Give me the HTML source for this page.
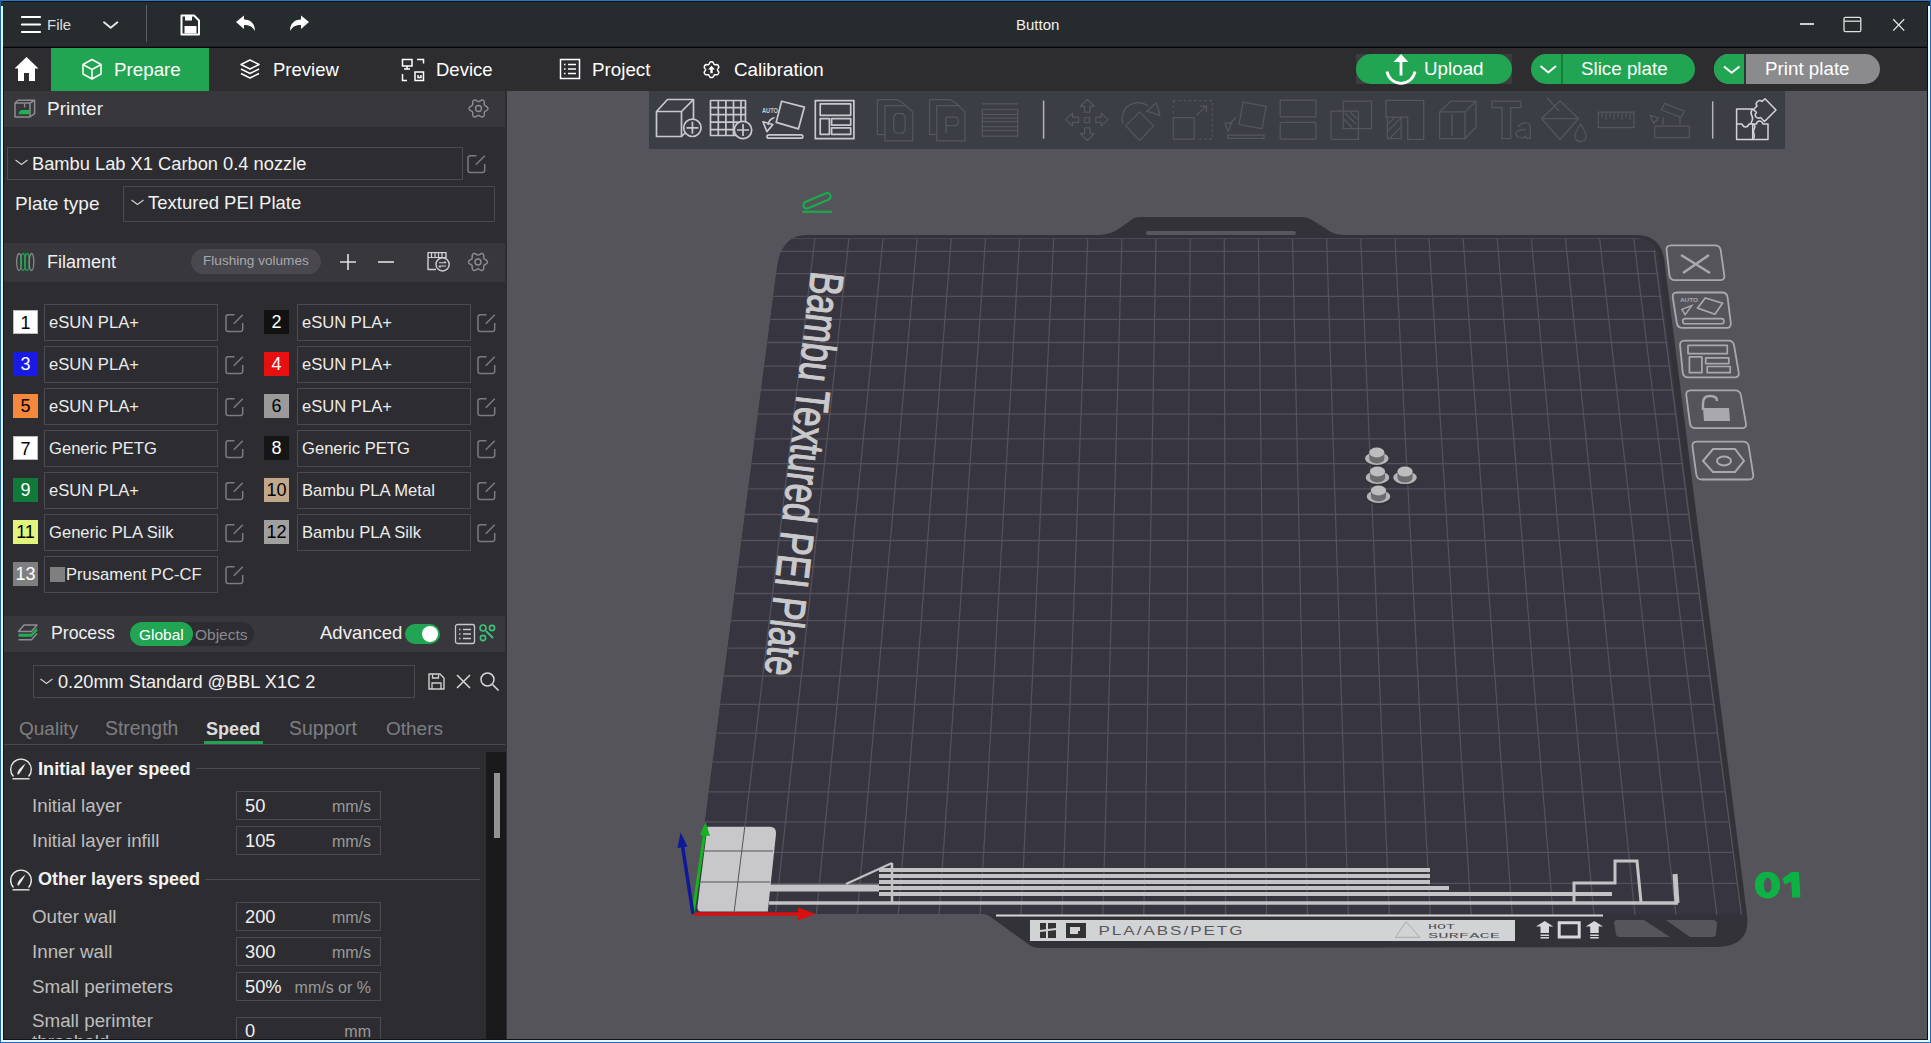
<!DOCTYPE html>
<html><head><meta charset="utf-8"><title>Button</title>
<style>
*{margin:0;padding:0;box-sizing:border-box}
html,body{width:1931px;height:1043px;overflow:hidden;background:#2d2d31}
body{position:relative;font-family:"Liberation Sans",sans-serif;color:#e8e8e8}
.a{position:absolute}
.t{position:absolute;white-space:nowrap;line-height:1}
svg{position:absolute;overflow:visible}
.ed{position:absolute;width:19px;height:19px}
.fbox{position:absolute;border:1px solid #4a4a50;background:#2d2d31}
.num{position:absolute;width:23px;height:23px;font-size:18px;line-height:24px;text-align:center}
.ftxt{position:absolute;font-size:16.6px;line-height:1;white-space:nowrap;color:#ececec}
.lab{position:absolute;font-size:18.8px;color:#bdbdbd;white-space:nowrap;line-height:1}
.inp{position:absolute;border:1px solid #4a4a50;width:145px;height:32px}
.inp .v{position:absolute;left:8px;font-size:18.3px;color:#f0f0f0;line-height:1}
.inp .u{position:absolute;right:9px;font-size:16px;color:#9a9a9a;line-height:1}
</style></head><body>

<div class="a" style="left:0;top:0;width:1931px;height:48px;background:#262b2e"></div>
<div class="a" style="left:0;top:46px;width:1931px;height:1px;background:#1c1f21"></div><div class="a" style="left:0;top:47px;width:1931px;height:1px;background:#050607"></div>
<div class="a" style="left:0;top:48px;width:1931px;height:43px;background:#2d2d30"></div>

<svg style="left:20px;top:14px" width="24" height="20" viewBox="0 0 24 20">
 <path d="M2 3H20M2 10.5H20M2 18H20" stroke="#fff" stroke-width="2.2" stroke-linecap="round"/>
</svg>
<div class="t" style="left:47px;top:16.8px;font-size:15px;color:#dedede">File</div>
<svg style="left:100px;top:18px" width="22" height="14" viewBox="100 18 22 14">
 <path d="M104 22.3L110.7 27.8L117.4 22.3" stroke="#e6e6e6" stroke-width="1.9" fill="none" stroke-linecap="round"/>
</svg>
<div class="a" style="left:146px;top:5px;width:1px;height:39px;background:#5a5e62"></div>
<svg style="left:178px;top:13px" width="24" height="24" viewBox="0 0 24 24">
 <path d="M3.5 2.5H16L21 7.5V21.5H3.5Z" stroke="#fff" stroke-width="2" fill="none" stroke-linejoin="round"/>
 <rect x="7" y="3" width="7" height="4.5" fill="#fff"/>
 <rect x="6.5" y="13" width="12" height="7.5" fill="#fff"/>
</svg>
<svg style="left:233px;top:14px" width="24" height="20" viewBox="0 0 24 20">
 <path d="M3 8L11 1.5V5.5C18 5.5 22 10 22 17C19.5 12.5 16 11 11 11V15Z" fill="#fff"/>
</svg>
<svg style="left:288px;top:14px" width="24" height="20" viewBox="0 0 24 20">
 <path d="M21 8L13 1.5V5.5C6 5.5 2 10 2 17C4.5 12.5 8 11 13 11V15Z" fill="#fff"/>
</svg>
<div class="t" style="left:1016px;top:17.2px;font-size:15px;color:#f0f0f0">Button</div>
<div class="a" style="left:1800px;top:23.3px;width:13.5px;height:1.3px;background:#d0d0d0"></div>
<svg style="left:1840px;top:12px" width="26" height="24" viewBox="1840 12 26 24">
 <rect x="1844" y="17.3" width="16.8" height="14.4" rx="1.5" stroke="#e0e0e0" stroke-width="1.3" fill="none"/>
 <path d="M1844 21.2H1860.8" stroke="#e0e0e0" stroke-width="1.3"/>
</svg>
<svg style="left:1888px;top:14px" width="22" height="22" viewBox="1888 14 22 22">
 <path d="M1893.2 19.2L1904.2 30.6M1904.2 19.2L1893.2 30.6" stroke="#e6e6e6" stroke-width="1.3"/>
</svg>

<svg style="left:13px;top:56px" width="28" height="26" viewBox="0 0 28 26">
 <path d="M13.5 1L1.5 12.5H5V25H11V17H16V25H22V12.5H25.5Z" fill="#fff"/>
</svg>
<div class="a" style="left:51px;top:48px;width:158px;height:43px;background:#22a552"></div>
<svg style="left:81px;top:58px" width="22" height="22" viewBox="0 0 22 22">
 <path d="M11 1.5L20 6.5V16L11 21L2 16V6.5Z M2 6.5L11 11.5L20 6.5 M11 11.5V21" stroke="#fff" stroke-width="1.5" fill="none" stroke-linejoin="round"/>
</svg>
<div class="t" style="left:114px;top:60.5px;font-size:18.8px;color:#fff">Prepare</div>
<svg style="left:239px;top:58px" width="22" height="22" viewBox="0 0 22 22">
 <path d="M11 2L20 6.5L11 11L2 6.5Z M2 11L11 15.5L20 11 M2 15.5L11 20L20 15.5" stroke="#fff" stroke-width="1.5" fill="none" stroke-linejoin="round"/>
</svg>
<div class="t" style="left:273px;top:60.6px;font-size:18.5px;color:#fff">Preview</div>
<svg style="left:401px;top:58px" width="24" height="24" viewBox="0 0 24 24">
 <path d="M1.5 1.5H11V8H1.5Z M6 8V11 M3 11H9" stroke="#fff" stroke-width="1.5" fill="none"/>
 <path d="M16 1.5H22.5V5.5 M1.5 16V22.5H6 M14 14H22.5V22.5H14Z M17 17V19.5H20V17" stroke="#fff" stroke-width="1.5" fill="none"/>
</svg>
<div class="t" style="left:436px;top:60.6px;font-size:18.5px;color:#fff">Device</div>
<svg style="left:559px;top:58px" width="22" height="22" viewBox="0 0 22 22">
 <rect x="1.5" y="1.5" width="19" height="19" stroke="#fff" stroke-width="1.5" fill="none"/>
 <path d="M5 6.5H6.5M9 6.5H17M5 11H6.5M9 11H17M5 15.5H6.5M9 15.5H17" stroke="#fff" stroke-width="1.5"/>
</svg>
<div class="t" style="left:592px;top:60.5px;font-size:18.8px;color:#fff">Project</div>
<svg style="left:700px;top:58px" width="24" height="24" viewBox="700 58 24 24">
 <path d="M717.40 69.70L717.43 69.91L717.52 70.12L717.65 70.35L717.81 70.59L717.97 70.84L718.10 71.10L718.17 71.36L718.62 71.74L718.73 72.05L718.75 72.34L718.72 72.62L718.66 72.89L718.58 73.15L718.47 73.41L718.34 73.65L718.19 73.88L718.03 74.10L717.84 74.31L717.64 74.49L717.41 74.66L717.15 74.79L716.83 74.85L716.27 74.64L716.01 74.71L715.72 74.73L715.42 74.72L715.14 74.71L714.87 74.70L714.64 74.73L714.45 74.81L714.29 74.94L714.15 75.12L714.02 75.35L713.89 75.61L713.75 75.87L713.59 76.12L713.39 76.31L713.29 76.89L713.08 77.14L712.84 77.30L712.58 77.41L712.32 77.50L712.05 77.55L711.78 77.59L711.50 77.60L711.22 77.59L710.95 77.55L710.68 77.50L710.42 77.41L710.16 77.30L709.92 77.14L709.71 76.89L709.61 76.31L709.41 76.12L709.25 75.87L709.11 75.61L708.98 75.35L708.85 75.12L708.71 74.94L708.55 74.81L708.36 74.73L708.13 74.70L707.86 74.71L707.58 74.72L707.28 74.73L706.99 74.71L706.73 74.64L706.17 74.85L705.85 74.79L705.59 74.66L705.36 74.49L705.16 74.31L704.97 74.10L704.81 73.88L704.66 73.65L704.53 73.41L704.42 73.15L704.34 72.89L704.28 72.62L704.25 72.34L704.27 72.05L704.38 71.74L704.83 71.36L704.90 71.10L705.03 70.84L705.19 70.59L705.35 70.35L705.48 70.12L705.57 69.91L705.60 69.70L705.57 69.49L705.48 69.28L705.35 69.05L705.19 68.81L705.03 68.56L704.90 68.30L704.83 68.04L704.38 67.66L704.27 67.35L704.25 67.06L704.28 66.78L704.34 66.51L704.42 66.25L704.53 65.99L704.66 65.75L704.81 65.52L704.97 65.30L705.16 65.09L705.36 64.91L705.59 64.74L705.85 64.61L706.17 64.55L706.73 64.76L706.99 64.69L707.28 64.67L707.58 64.68L707.86 64.69L708.13 64.70L708.36 64.67L708.55 64.59L708.71 64.46L708.85 64.28L708.98 64.05L709.11 63.79L709.25 63.53L709.41 63.28L709.61 63.09L709.71 62.51L709.92 62.26L710.16 62.10L710.42 61.99L710.68 61.90L710.95 61.85L711.22 61.81L711.50 61.80L711.78 61.81L712.05 61.85L712.32 61.90L712.58 61.99L712.84 62.10L713.08 62.26L713.29 62.51L713.39 63.09L713.59 63.28L713.75 63.53L713.89 63.79L714.02 64.05L714.15 64.28L714.29 64.46L714.45 64.59L714.64 64.67L714.87 64.70L715.14 64.69L715.42 64.68L715.72 64.67L716.01 64.69L716.27 64.76L716.83 64.55L717.15 64.61L717.41 64.74L717.64 64.91L717.84 65.09L718.03 65.30L718.19 65.52L718.34 65.75L718.47 65.99L718.58 66.25L718.66 66.51L718.72 66.78L718.75 67.06L718.73 67.35L718.62 67.66L718.17 68.04L718.10 68.30L717.97 68.56L717.81 68.81L717.65 69.05L717.52 69.28L717.43 69.49Z" stroke="#fff" stroke-width="1.5" fill="none" stroke-linejoin="round"/>
 <path d="M711.5 65.8L714.9 69.6H712.7V73.3H710.3V69.6H708.1Z" fill="#fff"/>
</svg>
<div class="t" style="left:734px;top:60.5px;font-size:18.8px;color:#fff">Calibration</div>

<div class="a" style="left:1356px;top:54px;width:156px;height:30px;background:#3b3d40"></div>
<div class="a" style="left:1356px;top:54px;width:156px;height:30px;border-radius:15px;background:#22a552"></div>
<svg style="left:1380px;top:50px" width="42" height="40" viewBox="1380 50 42 40">
 <path d="M1393.6 62L1401 54L1408.4 62Z" fill="#fff"/>
 <path d="M1401 61V75.5" stroke="#fff" stroke-width="2.8"/>
 <path d="M1387 71.5A14.2 14.2 0 0 0 1415 71.5" stroke="#fff" stroke-width="2.8" fill="none"/>
</svg>
<div class="t" style="left:1424px;top:59.5px;font-size:18.8px;color:#fff">Upload</div>
<div class="a" style="left:1531px;top:54px;width:164px;height:30px;border-radius:15px;background:#22a552"></div>
<div class="a" style="left:1561px;top:54px;width:2px;height:30px;background:#1b7a3d"></div>
<svg style="left:1536px;top:60px" width="24" height="18" viewBox="1536 60 24 18">
 <path d="M1540.5 66L1548.3 72.5L1556 66" stroke="#fff" stroke-width="2" fill="none"/>
</svg>
<div class="t" style="left:1581px;top:59.5px;font-size:18.8px;color:#fff">Slice plate</div>
<div class="a" style="left:1714px;top:54px;width:166px;height:30px;border-radius:15px;background:#8b8b8e"></div>
<div class="a" style="left:1714px;top:54px;width:30px;height:30px;border-radius:15px 0 0 15px;background:#22a552"></div>
<div class="a" style="left:1744px;top:54px;width:2px;height:30px;background:#2b3a30"></div>
<svg style="left:1719px;top:60px" width="24" height="18" viewBox="1719 60 24 18">
 <path d="M1724 66.5L1731.6 72.8L1739.5 66.5" stroke="#fff" stroke-width="2" fill="none"/>
</svg>
<div class="t" style="left:1765px;top:59.5px;font-size:18.8px;color:#fff">Print plate</div>

<div class="a" style="left:0;top:91px;width:507px;height:952px;background:#2d2d31"></div>
<div class="a" style="left:3px;top:91px;width:502px;height:36px;background:#37373c"></div>
<div class="a" style="left:3px;top:243px;width:502px;height:39px;background:#37373c"></div>
<div class="a" style="left:3px;top:616px;width:502px;height:36px;background:#37373c"></div>

<svg style="left:10px;top:95px" width="30" height="28" viewBox="10 95 30 28">
 <path d="M15 103H30V117H15Z M15 103L18 100.3H34.6L30 103 M34.6 100.3V113.6L30 117" stroke="#8c8c90" stroke-width="1.5" fill="none" stroke-linejoin="round"/>
 <path d="M24.6 103.4V107.4" stroke="#8c8c90" stroke-width="1.3"/>
 <path d="M18.3 114.2H29V110H21.5Q19 111 18.3 114.2Z" fill="#1fb152"/>
</svg>
<div class="t" style="left:47px;top:99px;font-size:19px;color:#f0f0f0">Printer</div>
<svg style="left:464px;top:94px" width="28" height="28" viewBox="464 94 28 28">
 <path d="M488.00 108.50L487.88 109.11L487.54 109.69L487.03 110.20L486.42 110.62L485.79 110.98L485.23 111.29L484.78 111.60L484.48 111.95L484.32 112.39L484.28 112.93L484.29 113.58L484.30 114.30L484.23 115.04L484.05 115.73L483.72 116.32L483.25 116.73L482.66 116.93L481.99 116.93L481.30 116.74L480.62 116.42L480.00 116.05L479.45 115.72L478.96 115.48L478.50 115.40L478.04 115.48L477.55 115.72L477.00 116.05L476.38 116.42L475.70 116.74L475.01 116.93L474.34 116.93L473.75 116.73L473.28 116.32L472.95 115.73L472.77 115.04L472.70 114.30L472.71 113.58L472.72 112.93L472.68 112.39L472.52 111.95L472.22 111.60L471.77 111.29L471.21 110.98L470.58 110.62L469.97 110.20L469.46 109.69L469.12 109.11L469.00 108.50L469.12 107.89L469.46 107.31L469.97 106.80L470.58 106.38L471.21 106.02L471.77 105.71L472.22 105.40L472.52 105.05L472.68 104.61L472.72 104.07L472.71 103.42L472.70 102.70L472.77 101.96L472.95 101.27L473.28 100.68L473.75 100.27L474.34 100.07L475.01 100.07L475.70 100.26L476.38 100.58L477.00 100.95L477.55 101.28L478.04 101.52L478.50 101.60L478.96 101.52L479.45 101.28L480.00 100.95L480.62 100.58L481.30 100.26L481.99 100.07L482.66 100.07L483.25 100.27L483.72 100.68L484.05 101.27L484.23 101.96L484.30 102.70L484.29 103.42L484.28 104.07L484.32 104.61L484.48 105.05L484.78 105.40L485.23 105.71L485.79 106.02L486.42 106.38L487.03 106.80L487.54 107.31L487.88 107.89Z" stroke="#8e8e92" stroke-width="1.4" fill="none"/>
 <circle cx="478.5" cy="108.5" r="3" stroke="#8e8e92" stroke-width="1.4" fill="none"/>
</svg>

<div class="fbox" style="left:7px;top:147px;width:456px;height:33px"></div>
<svg style="left:14px;top:157px" width="16" height="10" viewBox="0 0 16 10">
 <path d="M1.5 3L7.5 7.5L13.5 3" stroke="#cfcfcf" stroke-width="1.2" fill="none"/>
</svg>
<div class="t" style="left:32px;top:154.5px;font-size:18.3px;color:#f2f2f2">Bambu Lab X1 Carbon 0.4 nozzle</div>
<svg style="left:467px;top:154px" width="20" height="20" viewBox="0 0 20 20">
 <path d="M9.5 1.8H3.3Q1 1.8 1 4.1V16.2Q1 18.5 3.3 18.5H15.4Q17.7 18.5 17.7 16.2V10" stroke="#7c7c80" stroke-width="1.5" fill="none"/>
 <path d="M8.8 10.8L17.8 1.8" stroke="#7c7c80" stroke-width="1.5"/>
</svg>
<div class="t" style="left:15px;top:194px;font-size:19px;color:#f0f0f0">Plate type</div>
<div class="fbox" style="left:123px;top:186px;width:372px;height:36px"></div>
<svg style="left:130px;top:197px" width="16" height="10" viewBox="0 0 16 10">
 <path d="M1.5 3L7.5 7.5L13.5 3" stroke="#cfcfcf" stroke-width="1.2" fill="none"/>
</svg>
<div class="t" style="left:148px;top:194.3px;font-size:18.5px;color:#f2f2f2">Textured PEI Plate</div>

<svg style="left:15px;top:251px" width="22" height="22" viewBox="0 0 22 22">
 <ellipse cx="4" cy="11" rx="2.3" ry="8.5" stroke="#8a8a8e" stroke-width="1.3" fill="none"/>
 <ellipse cx="8" cy="11" rx="2.3" ry="8.5" stroke="#22a552" stroke-width="1.3" fill="none"/>
 <ellipse cx="12" cy="11" rx="2.3" ry="8.5" stroke="#22a552" stroke-width="1.3" fill="none"/>
 <ellipse cx="16.5" cy="11" rx="2.3" ry="8.5" stroke="#8a8a8e" stroke-width="1.3" fill="none"/>
</svg>
<div class="t" style="left:47px;top:252.8px;font-size:18px;color:#f0f0f0">Filament</div>
<div class="a" style="left:191px;top:249px;width:130px;height:25px;border-radius:12.5px;background:#48484e"></div>
<div class="t" style="left:203px;top:254px;font-size:13.6px;color:#a8a8ac">Flushing volumes</div>
<svg style="left:338px;top:252px" width="20" height="20" viewBox="0 0 20 20">
 <path d="M10 2V18M2 10H18" stroke="#e0e0e0" stroke-width="1.6"/>
</svg>
<svg style="left:376px;top:252px" width="20" height="20" viewBox="0 0 20 20">
 <path d="M2 10H18" stroke="#e0e0e0" stroke-width="1.6"/>
</svg>
<svg style="left:424px;top:248px" width="28" height="28" viewBox="424 248 28 28">
 <path d="M436 269.5H428V252.6H446V258" stroke="#d0d0d4" stroke-width="1.4" fill="none" stroke-linejoin="round"/>
 <path d="M428 257.5H446 M431.5 253V257.5M435 253V257.5M438.5 253V257.5M442 253V257.5" stroke="#d0d0d4" stroke-width="1.2"/>
 <circle cx="442.6" cy="264.4" r="6.6" stroke="#d0d0d4" stroke-width="1.4" fill="#37373c"/>
 <path d="M439 262.8H446M444.5 261.3L446.2 262.8 M446 266H439M440.5 267.5L438.8 266" stroke="#d0d0d4" stroke-width="1.1" fill="none"/>
</svg>
<svg style="left:464px;top:248px" width="28" height="28" viewBox="464 248 28 28">
 <path d="M487.50 262.00L487.38 262.61L487.04 263.19L486.53 263.70L485.92 264.12L485.29 264.48L484.73 264.79L484.28 265.10L483.98 265.45L483.82 265.89L483.78 266.43L483.79 267.08L483.80 267.80L483.73 268.54L483.55 269.23L483.22 269.82L482.75 270.23L482.16 270.43L481.49 270.43L480.80 270.24L480.12 269.92L479.50 269.55L478.95 269.22L478.46 268.98L478.00 268.90L477.54 268.98L477.05 269.22L476.50 269.55L475.88 269.92L475.20 270.24L474.51 270.43L473.84 270.43L473.25 270.23L472.78 269.82L472.45 269.23L472.27 268.54L472.20 267.80L472.21 267.08L472.22 266.43L472.18 265.89L472.02 265.45L471.72 265.10L471.27 264.79L470.71 264.48L470.08 264.12L469.47 263.70L468.96 263.19L468.62 262.61L468.50 262.00L468.62 261.39L468.96 260.81L469.47 260.30L470.08 259.88L470.71 259.52L471.27 259.21L471.72 258.90L472.02 258.55L472.18 258.11L472.22 257.57L472.21 256.92L472.20 256.20L472.27 255.46L472.45 254.77L472.78 254.18L473.25 253.77L473.84 253.57L474.51 253.57L475.20 253.76L475.88 254.08L476.50 254.45L477.05 254.78L477.54 255.02L478.00 255.10L478.46 255.02L478.95 254.78L479.50 254.45L480.12 254.08L480.80 253.76L481.49 253.57L482.16 253.57L482.75 253.77L483.22 254.18L483.55 254.77L483.73 255.46L483.80 256.20L483.79 256.92L483.78 257.57L483.82 258.11L483.98 258.55L484.28 258.90L484.73 259.21L485.29 259.52L485.92 259.88L486.53 260.30L487.04 260.81L487.38 261.39Z" stroke="#8e8e92" stroke-width="1.4" fill="none"/>
 <circle cx="478" cy="262" r="3" stroke="#8e8e92" stroke-width="1.4" fill="none"/>
</svg>
<div class="num" style="left:13px;top:310px;width:25px;height:24px;background:#ffffff;color:#000;border:1px solid #bbb;">1</div>
<div class="fbox" style="left:44px;top:304px;width:174px;height:37px"></div>
<div class="ftxt" style="left:49px;top:315px">eSUN PLA+</div>
<svg style="left:225px;top:313px" width="20" height="20" viewBox="0 0 20 20">
 <path d="M9.5 1.8H3.3Q1 1.8 1 4.1V16.2Q1 18.5 3.3 18.5H15.4Q17.7 18.5 17.7 16.2V10" stroke="#7c7c80" stroke-width="1.5" fill="none"/>
 <path d="M8.8 10.8L17.8 1.8" stroke="#7c7c80" stroke-width="1.5"/>
</svg>
<div class="num" style="left:264px;top:310px;width:25px;height:24px;background:#111111;color:#fff;">2</div>
<div class="fbox" style="left:297px;top:304px;width:174px;height:37px"></div>
<div class="ftxt" style="left:302px;top:315px">eSUN PLA+</div>
<svg style="left:477px;top:313px" width="20" height="20" viewBox="0 0 20 20">
 <path d="M9.5 1.8H3.3Q1 1.8 1 4.1V16.2Q1 18.5 3.3 18.5H15.4Q17.7 18.5 17.7 16.2V10" stroke="#7c7c80" stroke-width="1.5" fill="none"/>
 <path d="M8.8 10.8L17.8 1.8" stroke="#7c7c80" stroke-width="1.5"/>
</svg>
<div class="num" style="left:13px;top:352px;width:25px;height:24px;background:#1a1ae6;color:#fff;">3</div>
<div class="fbox" style="left:44px;top:346px;width:174px;height:37px"></div>
<div class="ftxt" style="left:49px;top:357px">eSUN PLA+</div>
<svg style="left:225px;top:355px" width="20" height="20" viewBox="0 0 20 20">
 <path d="M9.5 1.8H3.3Q1 1.8 1 4.1V16.2Q1 18.5 3.3 18.5H15.4Q17.7 18.5 17.7 16.2V10" stroke="#7c7c80" stroke-width="1.5" fill="none"/>
 <path d="M8.8 10.8L17.8 1.8" stroke="#7c7c80" stroke-width="1.5"/>
</svg>
<div class="num" style="left:264px;top:352px;width:25px;height:24px;background:#e61010;color:#fff;">4</div>
<div class="fbox" style="left:297px;top:346px;width:174px;height:37px"></div>
<div class="ftxt" style="left:302px;top:357px">eSUN PLA+</div>
<svg style="left:477px;top:355px" width="20" height="20" viewBox="0 0 20 20">
 <path d="M9.5 1.8H3.3Q1 1.8 1 4.1V16.2Q1 18.5 3.3 18.5H15.4Q17.7 18.5 17.7 16.2V10" stroke="#7c7c80" stroke-width="1.5" fill="none"/>
 <path d="M8.8 10.8L17.8 1.8" stroke="#7c7c80" stroke-width="1.5"/>
</svg>
<div class="num" style="left:13px;top:394px;width:25px;height:24px;background:#f5883a;color:#000;">5</div>
<div class="fbox" style="left:44px;top:388px;width:174px;height:37px"></div>
<div class="ftxt" style="left:49px;top:399px">eSUN PLA+</div>
<svg style="left:225px;top:397px" width="20" height="20" viewBox="0 0 20 20">
 <path d="M9.5 1.8H3.3Q1 1.8 1 4.1V16.2Q1 18.5 3.3 18.5H15.4Q17.7 18.5 17.7 16.2V10" stroke="#7c7c80" stroke-width="1.5" fill="none"/>
 <path d="M8.8 10.8L17.8 1.8" stroke="#7c7c80" stroke-width="1.5"/>
</svg>
<div class="num" style="left:264px;top:394px;width:25px;height:24px;background:#9a9a9a;color:#000;">6</div>
<div class="fbox" style="left:297px;top:388px;width:174px;height:37px"></div>
<div class="ftxt" style="left:302px;top:399px">eSUN PLA+</div>
<svg style="left:477px;top:397px" width="20" height="20" viewBox="0 0 20 20">
 <path d="M9.5 1.8H3.3Q1 1.8 1 4.1V16.2Q1 18.5 3.3 18.5H15.4Q17.7 18.5 17.7 16.2V10" stroke="#7c7c80" stroke-width="1.5" fill="none"/>
 <path d="M8.8 10.8L17.8 1.8" stroke="#7c7c80" stroke-width="1.5"/>
</svg>
<div class="num" style="left:13px;top:436px;width:25px;height:24px;background:#ffffff;color:#000;border:1px solid #bbb;">7</div>
<div class="fbox" style="left:44px;top:430px;width:174px;height:37px"></div>
<div class="ftxt" style="left:49px;top:441px">Generic PETG</div>
<svg style="left:225px;top:439px" width="20" height="20" viewBox="0 0 20 20">
 <path d="M9.5 1.8H3.3Q1 1.8 1 4.1V16.2Q1 18.5 3.3 18.5H15.4Q17.7 18.5 17.7 16.2V10" stroke="#7c7c80" stroke-width="1.5" fill="none"/>
 <path d="M8.8 10.8L17.8 1.8" stroke="#7c7c80" stroke-width="1.5"/>
</svg>
<div class="num" style="left:264px;top:436px;width:25px;height:24px;background:#151515;color:#fff;">8</div>
<div class="fbox" style="left:297px;top:430px;width:174px;height:37px"></div>
<div class="ftxt" style="left:302px;top:441px">Generic PETG</div>
<svg style="left:477px;top:439px" width="20" height="20" viewBox="0 0 20 20">
 <path d="M9.5 1.8H3.3Q1 1.8 1 4.1V16.2Q1 18.5 3.3 18.5H15.4Q17.7 18.5 17.7 16.2V10" stroke="#7c7c80" stroke-width="1.5" fill="none"/>
 <path d="M8.8 10.8L17.8 1.8" stroke="#7c7c80" stroke-width="1.5"/>
</svg>
<div class="num" style="left:13px;top:478px;width:25px;height:24px;background:#0f7a3a;color:#fff;">9</div>
<div class="fbox" style="left:44px;top:472px;width:174px;height:37px"></div>
<div class="ftxt" style="left:49px;top:483px">eSUN PLA+</div>
<svg style="left:225px;top:481px" width="20" height="20" viewBox="0 0 20 20">
 <path d="M9.5 1.8H3.3Q1 1.8 1 4.1V16.2Q1 18.5 3.3 18.5H15.4Q17.7 18.5 17.7 16.2V10" stroke="#7c7c80" stroke-width="1.5" fill="none"/>
 <path d="M8.8 10.8L17.8 1.8" stroke="#7c7c80" stroke-width="1.5"/>
</svg>
<div class="num" style="left:264px;top:478px;width:25px;height:24px;background:#c2a88a;color:#000;">10</div>
<div class="fbox" style="left:297px;top:472px;width:174px;height:37px"></div>
<div class="ftxt" style="left:302px;top:483px">Bambu PLA Metal</div>
<svg style="left:477px;top:481px" width="20" height="20" viewBox="0 0 20 20">
 <path d="M9.5 1.8H3.3Q1 1.8 1 4.1V16.2Q1 18.5 3.3 18.5H15.4Q17.7 18.5 17.7 16.2V10" stroke="#7c7c80" stroke-width="1.5" fill="none"/>
 <path d="M8.8 10.8L17.8 1.8" stroke="#7c7c80" stroke-width="1.5"/>
</svg>
<div class="num" style="left:13px;top:520px;width:25px;height:24px;background:#e1f57a;color:#000;">11</div>
<div class="fbox" style="left:44px;top:514px;width:174px;height:37px"></div>
<div class="ftxt" style="left:49px;top:525px">Generic PLA Silk</div>
<svg style="left:225px;top:523px" width="20" height="20" viewBox="0 0 20 20">
 <path d="M9.5 1.8H3.3Q1 1.8 1 4.1V16.2Q1 18.5 3.3 18.5H15.4Q17.7 18.5 17.7 16.2V10" stroke="#7c7c80" stroke-width="1.5" fill="none"/>
 <path d="M8.8 10.8L17.8 1.8" stroke="#7c7c80" stroke-width="1.5"/>
</svg>
<div class="num" style="left:264px;top:520px;width:25px;height:24px;background:#a0a0a0;color:#000;">12</div>
<div class="fbox" style="left:297px;top:514px;width:174px;height:37px"></div>
<div class="ftxt" style="left:302px;top:525px">Bambu PLA Silk</div>
<svg style="left:477px;top:523px" width="20" height="20" viewBox="0 0 20 20">
 <path d="M9.5 1.8H3.3Q1 1.8 1 4.1V16.2Q1 18.5 3.3 18.5H15.4Q17.7 18.5 17.7 16.2V10" stroke="#7c7c80" stroke-width="1.5" fill="none"/>
 <path d="M8.8 10.8L17.8 1.8" stroke="#7c7c80" stroke-width="1.5"/>
</svg>
<div class="num" style="left:13px;top:562px;width:25px;height:24px;background:#7f7f7f;color:#fff;">13</div>
<div class="fbox" style="left:44px;top:556px;width:174px;height:37px"></div>
<div class="a" style="left:50px;top:567px;width:15px;height:15px;background:#7f7f7f"></div>
<div class="ftxt" style="left:66px;top:567px">Prusament PC-CF</div>
<svg style="left:225px;top:565px" width="20" height="20" viewBox="0 0 20 20">
 <path d="M9.5 1.8H3.3Q1 1.8 1 4.1V16.2Q1 18.5 3.3 18.5H15.4Q17.7 18.5 17.7 16.2V10" stroke="#7c7c80" stroke-width="1.5" fill="none"/>
 <path d="M8.8 10.8L17.8 1.8" stroke="#7c7c80" stroke-width="1.5"/>
</svg>

<svg style="left:14px;top:622px" width="26" height="22" viewBox="14 622 26 22">
 <path d="M18.5 631.5L24 625H37L31.5 631.5Z" stroke="#8e8e92" stroke-width="1.5" fill="none" stroke-linejoin="round"/>
 <path d="M18.5 634.5H31.5L37 628.5 M18.5 636H31.5L37 630" stroke="#1fae50" stroke-width="1.6" fill="none"/>
 <path d="M18.5 639.8H31.5L37 633.5" stroke="#8e8e92" stroke-width="1.5" fill="none"/>
</svg>
<div class="t" style="left:51px;top:625.1px;font-size:17.7px;color:#f0f0f0">Process</div>
<div class="a" style="left:130px;top:622px;width:124px;height:24px;border-radius:12px;background:#2d2d31"></div>
<div class="a" style="left:130px;top:622px;width:63px;height:24px;border-radius:12px;background:#22a552"></div>
<div class="t" style="left:139px;top:626.5px;font-size:15.5px;color:#fff">Global</div>
<div class="t" style="left:195px;top:626.5px;font-size:15.5px;color:#8a8a8e">Objects</div>
<div class="t" style="left:320px;top:624.3px;font-size:18.5px;color:#f0f0f0">Advanced</div>
<div class="a" style="left:405px;top:624px;width:35px;height:20px;border-radius:10px;background:#22a552"></div>
<div class="a" style="left:422px;top:626px;width:16px;height:16px;border-radius:8px;background:#fff"></div>
<svg style="left:454px;top:623px" width="22" height="22" viewBox="0 0 22 22">
 <rect x="1.5" y="1.5" width="19" height="19" rx="2" stroke="#c8c8cc" stroke-width="1.3" fill="none"/>
 <path d="M5 6.5H6.5M9 6.5H17M5 11H6.5M9 11H17M5 15.5H6.5M9 15.5H17" stroke="#c8c8cc" stroke-width="1.3"/>
</svg>
<svg style="left:478px;top:623px" width="20" height="20" viewBox="0 0 20 20">
 <circle cx="5" cy="5" r="3" stroke="#3ec27a" stroke-width="1.6" fill="none"/>
 <circle cx="14" cy="5" r="2.6" stroke="#3ec27a" stroke-width="1.6" fill="none"/>
 <circle cx="5" cy="15" r="2.6" stroke="#3ec27a" stroke-width="1.6" fill="none"/>
 <path d="M8 8L15 15" stroke="#3ec27a" stroke-width="2"/>
</svg>

<div class="fbox" style="left:33px;top:665px;width:382px;height:33px"></div>
<svg style="left:39px;top:676px" width="16" height="10" viewBox="0 0 16 10">
 <path d="M1.5 3L7.5 7.5L13.5 3" stroke="#cfcfcf" stroke-width="1.2" fill="none"/>
</svg>
<div class="t" style="left:58px;top:673.1px;font-size:18.2px;color:#f2f2f2">0.20mm Standard @BBL X1C 2</div>
<svg style="left:427px;top:672px" width="19" height="19" viewBox="0 0 19 19">
 <path d="M2 2H13L17 6V17H2Z" stroke="#d0d0d0" stroke-width="1.4" fill="none" stroke-linejoin="round"/>
 <path d="M5.5 2.5V6H11.5V2.5 M5 17V11H14V17" stroke="#d0d0d0" stroke-width="1.3" fill="none"/>
</svg>
<svg style="left:455px;top:673px" width="17" height="17" viewBox="0 0 17 17">
 <path d="M2 2L15 15M15 2L2 15" stroke="#d8d8d8" stroke-width="1.5"/>
</svg>
<svg style="left:479px;top:671px" width="21" height="21" viewBox="0 0 21 21">
 <circle cx="8.5" cy="8.5" r="6.5" stroke="#d8d8d8" stroke-width="1.5" fill="none"/>
 <path d="M13.5 13.5L19.5 19.5" stroke="#d8d8d8" stroke-width="1.6"/>
</svg>

<div class="t" style="left:19px;top:718.9px;font-size:19px;color:#7e7e82">Quality</div>
<div class="t" style="left:105px;top:718.6px;font-size:19.4px;color:#7e7e82">Strength</div>
<div class="t" style="left:206px;top:719.8px;font-size:18.1px;color:#dcdcdc;font-weight:bold">Speed</div>
<div class="t" style="left:289px;top:718.6px;font-size:19.4px;color:#7e7e82">Support</div>
<div class="t" style="left:386px;top:718.9px;font-size:19px;color:#7e7e82">Others</div>
<div class="a" style="left:3px;top:744px;width:502px;height:1px;background:#48484e"></div>
<div class="a" style="left:204px;top:741px;width:59px;height:3px;background:#22a552"></div>
<svg style="left:9px;top:757px" width="24" height="24" viewBox="0 0 24 24">
 <path d="M4.5 19.5A10.3 10.3 0 1 1 19.5 19.5" stroke="#e8e8e8" stroke-width="1.4" fill="none"/>
 <path d="M3.5 21.8H20.5" stroke="#e8e8e8" stroke-width="1.4"/>
 <path d="M8.3 16.5Q8.5 12.5 16.5 6.5Q12.5 14.5 9.5 17.5Q8.2 17.8 8.3 16.5Z" fill="#e8e8e8"/>
</svg>
<div class="t" style="left:38px;top:759.6px;font-size:18.2px;color:#f2f2f2;font-weight:bold">Initial layer speed</div>
<div class="a" style="left:196px;top:768px;width:284px;height:1px;background:#4a4a50"></div>
<svg style="left:9px;top:868px" width="24" height="24" viewBox="0 0 24 24">
 <path d="M4.5 19.5A10.3 10.3 0 1 1 19.5 19.5" stroke="#e8e8e8" stroke-width="1.4" fill="none"/>
 <path d="M3.5 21.8H20.5" stroke="#e8e8e8" stroke-width="1.4"/>
 <path d="M8.3 16.5Q8.5 12.5 16.5 6.5Q12.5 14.5 9.5 17.5Q8.2 17.8 8.3 16.5Z" fill="#e8e8e8"/>
</svg>
<div class="t" style="left:38px;top:870.4px;font-size:18px;color:#f2f2f2;font-weight:bold">Other layers speed</div>
<div class="a" style="left:205px;top:879px;width:275px;height:1px;background:#4a4a50"></div>
<div class="lab" style="left:32px;top:796.7px">Initial layer</div>
<div class="inp" style="left:236px;top:791px;height:29px"><span class="v" style="top:5.1px">50</span><span class="u" style="top:6.6px">mm/s</span></div>
<div class="lab" style="left:32px;top:831.6px">Initial layer infill</div>
<div class="inp" style="left:236px;top:826px;height:29px"><span class="v" style="top:5.0px">105</span><span class="u" style="top:6.5px">mm/s</span></div>
<div class="lab" style="left:32px;top:907.7px">Outer wall</div>
<div class="inp" style="left:236px;top:902px;height:29px"><span class="v" style="top:5.1px">200</span><span class="u" style="top:6.6px">mm/s</span></div>
<div class="lab" style="left:32px;top:942.6px">Inner wall</div>
<div class="inp" style="left:236px;top:937px;height:29px"><span class="v" style="top:5.0px">300</span><span class="u" style="top:6.5px">mm/s</span></div>
<div class="lab" style="left:32px;top:977.7px">Small perimeters</div>
<div class="inp" style="left:236px;top:972px;height:29px"><span class="v" style="top:5.1px">50%</span><span class="u" style="top:6.6px">mm/s or %</span></div>

<div class="lab" style="left:32px;top:1011.8px">Small perimter</div>
<div class="lab" style="left:32px;top:1033px">threshold</div>
<div class="inp" style="left:236px;top:1017px;height:29px"><span class="v" style="top:4.2px">0</span><span class="u" style="top:6px">mm</span></div>
<div class="a" style="left:486px;top:752px;width:20px;height:291px;background:#19191b"></div>
<div class="a" style="left:494px;top:773px;width:6px;height:65px;background:#939395"></div>

<div class="a" style="left:507px;top:91px;width:1421px;height:952px;background:#55545b"></div>
<div class="a" style="left:649px;top:91px;width:1136px;height:58px;background:#3c3e45"></div>
<svg style="left:0;top:0" width="1931" height="1043" viewBox="0 0 1931 1043">
<path d="M693 914 L777 268 Q781 236 806 235 L1099 235 Q1110 235 1120 228 L1134 218 Q1137 217 1142 217 L1302 217 Q1307 217 1312 220 L1331 232 Q1336 235 1345 235 L1638 235 Q1660 236 1664 258 L1747 915 Q1751 946 1718 947 L1040 948 Q1033 948 1028 944 L992 918 Q988 914 982 914 Z" fill="#333238"/>
<path d="M693 914 L777 268 Q780 238 806 238 L1636 238 Q1656 238 1659 258 L1739 914 Z" fill="#37353f"/>
<rect x="1146" y="231" width="150" height="4" rx="2" fill="#57565c"/>
<path d="M814.9 238.0L734.4 914.9M849.0 238.0L775.4 914.9M883.1 238.0L816.3 914.9M917.2 238.0L857.2 914.9M951.3 238.0L898.2 914.9M985.5 238.0L939.1 914.9M1019.6 238.0L980.0 914.9M1053.7 238.0L1021.0 914.9M1087.8 238.0L1061.9 914.9M1121.9 238.0L1102.8 914.9M1156.0 238.0L1143.8 914.9M1190.2 238.0L1184.7 914.9M1224.3 238.0L1225.6 914.9M1258.4 238.0L1266.6 914.9M1292.5 238.0L1307.5 914.9M1326.6 238.0L1348.4 914.9M1360.7 238.0L1389.4 914.9M1394.9 238.0L1430.3 914.9M1429.0 238.0L1471.2 914.9M1463.1 238.0L1512.2 914.9M1497.2 238.0L1553.1 914.9M1531.3 238.0L1594.0 914.9M1565.4 238.0L1635.0 914.9M1599.6 238.0L1675.9 914.9M1633.7 238.0L1716.8 914.9M779.2 251.3L1655.8 251.3M776.3 273.7L1658.7 273.7M773.3 296.3L1661.7 296.3M770.3 319.3L1664.6 319.3M767.3 342.5L1667.6 342.5M764.2 366.1L1670.6 366.1M761.1 390.0L1673.7 390.0M758.0 414.2L1676.8 414.2M754.8 438.8L1680.0 438.8M751.6 463.7L1683.2 463.7M748.3 488.9L1686.5 488.9M744.9 514.5L1689.8 514.5M741.6 540.5L1693.1 540.5M738.1 566.8L1696.5 566.8M734.7 593.5L1700.0 593.5M731.1 620.6L1703.5 620.6M727.6 648.1L1707.0 648.1M723.9 676.0L1710.6 676.0M720.3 704.3L1714.2 704.3M716.5 733.1L1717.9 733.1M712.7 762.2L1721.7 762.2M708.9 791.9L1725.5 791.9M705.0 821.9L1729.4 821.9M701.0 852.4L1733.3 852.4M697.0 883.4L1737.3 883.4" stroke="#53515b" stroke-width="1.3" fill="none"/>
<path d="M790 238.5H1640" stroke="#4a4950" stroke-width="1.2"/>
<path d="M1654.1 250.0 L1741.4 914.9" stroke="#55545c" stroke-width="1.4"/>
<text transform="translate(811.5,270.5) rotate(96.6)" font-family="Liberation Sans" font-size="47" fill="#c9c9cb" stroke="#c9c9cb" stroke-width="1.2" textLength="406" lengthAdjust="spacingAndGlyphs">Bambu Textured PEI Plate</text>
<path d="M996 915.5H1603" stroke="#d8d8da" stroke-width="2"/>
<path d="M1030 920H1515V941H1030Z" fill="#d1d3d5"/>
<rect x="1040" y="923" width="16" height="15" fill="#333"/><path d="M1047 923V938 M1040 931L1056 929" stroke="#d1d3d5" stroke-width="2"/>
<rect x="1066" y="923" width="20" height="15" fill="#333"/><path d="M1070 927H1080V934H1070Z" fill="#d1d3d5"/><rect x="1078" y="931" width="4" height="4" fill="#333"/>
<text x="1098.5" y="934.6" font-family="Liberation Sans" font-size="13" fill="#58585c" textLength="146" lengthAdjust="spacingAndGlyphs" letter-spacing="1.5">PLA/ABS/PETG</text>
<path d="M1395.5 937.3L1406 921.7L1419.8 937.3Z" stroke="#a8aaac" stroke-width="1" fill="none"/>
<text x="1428" y="928.8" font-family="Liberation Mono" font-size="8" fill="#505052" textLength="27" lengthAdjust="spacingAndGlyphs">HOT</text>
<text x="1428" y="937.5" font-family="Liberation Mono" font-size="8" fill="#505052" textLength="72" lengthAdjust="spacingAndGlyphs">SURFACE</text>
<path d="M1544.7 921L1553.4 926.5H1549V933H1540.5V926.5H1536Z M1540.5 934.5H1549V936H1540.5Z M1540.5 937H1549V938.5H1540.5Z" fill="#d8d8da"/>
<path d="M1559.2 922.8H1579.2V937H1559.2Z" stroke="#d8d8da" stroke-width="3" fill="none"/>
<path d="M1594.4 921L1603 926.5H1598.7V933H1590.2V926.5H1585.7Z M1590.2 934.5H1598.7V936H1590.2Z M1590.2 937H1598.7V938.5H1590.2Z" fill="#d8d8da"/>
<path d="M1614 923Q1614 920 1618 920H1644L1670 937H1620Q1616 937 1616 934Z" fill="#56555b"/>
<path d="M1666 920H1712Q1717 920 1717 924L1716 934Q1716 937 1712 937H1690Z" fill="#56555b"/>
<path d="M770 888H879" stroke="#c3c3c5" stroke-width="7"/>
<path d="M846 884L892 863" stroke="#c3c3c5" stroke-width="2"/>
<path d="M879 870H1430" stroke="#c3c3c5" stroke-width="4"/>
<path d="M879 876H1430" stroke="#c3c3c5" stroke-width="4"/>
<path d="M879 882H1430" stroke="#c3c3c5" stroke-width="4"/>
<path d="M879 888H1449" stroke="#c3c3c5" stroke-width="4"/>
<path d="M879 894H1612" stroke="#c3c3c5" stroke-width="4"/>
<path d="M892 863V902" stroke="#c3c3c5" stroke-width="2.5"/>
<path d="M769 903H1678" stroke="#c3c3c5" stroke-width="3.5"/>
<path d="M1574 902V883H1615V861H1637L1641 902" stroke="#c3c3c5" stroke-width="3" fill="none"/>
<path d="M1675 874L1677 903" stroke="#c3c3c5" stroke-width="5"/>
<path d="M701 911.5Q697 911.5 697.5 906L707.4 826.8H770Q776.5 826.8 776 834L767.8 911.5Z" fill="#c8c8ca"/>
<path d="M704 851H773 M700.5 882H770 M744.8 826.8L734.2 911.5" stroke="#55555a" stroke-width="1"/>
<path d="M693 914H800" stroke="#d81010" stroke-width="3.5"/><path d="M798 907.5L816 914L798 920.5Z" fill="#d81010"/>
<path d="M693 914L704.5 834" stroke="#12b520" stroke-width="3"/><path d="M700 835L705.5 822L710 836Z" fill="#12b520"/>
<path d="M693 914L682.5 846" stroke="#10189a" stroke-width="3.5"/><path d="M677.5 848L680.6 832.4L687.5 846.5Z" fill="#10189a"/>
<ellipse cx="1376.8" cy="460.0" rx="12" ry="7" fill="#2e2d33" opacity="0.6"/><ellipse cx="1376.8" cy="458.5" rx="11.7" ry="6.4" fill="#b4b4b6"/><path d="M1369.2 452.5V458.5A7.6 5 0 0 0 1384.4 458.5V452.5Z" fill="#6c6c70"/><ellipse cx="1376.8" cy="452.5" rx="7.6" ry="5" fill="#bdbdbf"/>
<ellipse cx="1377.5" cy="479.0" rx="12" ry="7" fill="#2e2d33" opacity="0.6"/><ellipse cx="1377.5" cy="477.5" rx="11.7" ry="6.4" fill="#b4b4b6"/><path d="M1369.9 471.5V477.5A7.6 5 0 0 0 1385.1 477.5V471.5Z" fill="#6c6c70"/><ellipse cx="1377.5" cy="471.5" rx="7.6" ry="5" fill="#bdbdbf"/>
<ellipse cx="1405.0" cy="479.1" rx="12" ry="7" fill="#2e2d33" opacity="0.6"/><ellipse cx="1405.0" cy="477.6" rx="11.7" ry="6.4" fill="#b4b4b6"/><path d="M1397.4 471.6V477.6A7.6 5 0 0 0 1412.6 477.6V471.6Z" fill="#6c6c70"/><ellipse cx="1405.0" cy="471.6" rx="7.6" ry="5" fill="#bdbdbf"/>
<ellipse cx="1378.5" cy="498.0" rx="12" ry="7" fill="#2e2d33" opacity="0.6"/><ellipse cx="1378.5" cy="496.5" rx="11.7" ry="6.4" fill="#b4b4b6"/><path d="M1370.9 490.5V496.5A7.6 5 0 0 0 1386.1 496.5V490.5Z" fill="#6c6c70"/><ellipse cx="1378.5" cy="490.5" rx="7.6" ry="5" fill="#bdbdbf"/>
<path fill-rule="evenodd" fill="#0db245" d="M1767.3 871.7C1775.5 871.7 1780 877.5 1780 885C1780 893 1775.5 898.4 1767.3 898.4C1759.2 898.4 1754.9 892.5 1754.9 885C1754.9 877.5 1759.2 871.7 1767.3 871.7Z M1767.8 877.8C1765.4 877.8 1764 881 1764 885.3C1764 889.8 1765.4 892.6 1767.8 892.6C1770.3 892.6 1771.5 889.5 1771.5 885.3C1771.5 881 1770.3 877.8 1767.8 877.8Z"/>
<path fill="#0db245" d="M1782.5 878.5L1791.5 872H1799L1800.4 897.5H1792.3L1791.2 881.5L1784.5 884.5Z"/>
<path d="M802.5 211.8H832" stroke="#1fa34f" stroke-width="2.4"/>
<rect x="802.5" y="197.4" width="29" height="6.8" rx="3.4" transform="rotate(-23 817 200.8)" stroke="#16b04a" stroke-width="2.1" fill="none"/>
<path d="M1666.6 250.3Q1666.0 245.3 1671.0 245.3L1715.0 245.3Q1720.0 245.3 1720.7 250.2L1724.3 275.3Q1725.0 280.2 1720.0 280.2L1675.0 280.2Q1670.0 280.2 1669.4 275.2Z" stroke="#a9a9ad" stroke-width="1.8" fill="none"/>
<path d="M1672.8 297.4Q1672.0 292.5 1677.0 292.5L1722.0 292.5Q1727.0 292.5 1727.6 297.5L1730.8 322.9Q1731.4 327.9 1726.4 327.9L1682.6 327.9Q1677.6 327.9 1676.8 323.0Z" stroke="#a9a9ad" stroke-width="1.8" fill="none"/>
<path d="M1680.1 345.6Q1679.6 340.6 1684.6 340.6L1728.3 340.6Q1733.3 340.6 1734.1 345.5L1738.7 372.4Q1739.5 377.3 1734.5 377.3L1688.2 377.3Q1683.2 377.3 1682.7 372.3Z" stroke="#a9a9ad" stroke-width="1.8" fill="none"/>
<path d="M1686.3 395.3Q1685.7 390.3 1690.7 390.3L1735.0 390.3Q1740.0 390.3 1740.9 395.2L1745.9 423.3Q1746.8 428.2 1741.8 428.2L1695.5 428.2Q1690.5 428.2 1689.9 423.2Z" stroke="#a9a9ad" stroke-width="1.8" fill="none"/>
<path d="M1692.5 446.6Q1691.8 441.6 1696.8 441.6L1743.0 441.6Q1748.0 441.6 1748.8 446.5L1753.2 474.6Q1754.0 479.5 1749.0 479.5L1702.0 479.5Q1697.0 479.5 1696.3 474.5Z" stroke="#a9a9ad" stroke-width="1.8" fill="none"/>
<path d="M1681 255L1710 273M1709 255L1683 273" stroke="#a9a9ad" stroke-width="2.5"/>
<rect x="1682.7" y="318.6" width="41.3" height="5.2" rx="2.6" stroke="#a9a9ad" stroke-width="1.6" fill="none"/>
<path d="M1697.6 308L1705.3 298L1722.5 303.2L1714.9 314.2Z" stroke="#a9a9ad" stroke-width="1.7" fill="none"/>
<text x="1680" y="301.5" font-size="5.5" font-weight="bold" fill="#a9a9ad" textLength="18" lengthAdjust="spacingAndGlyphs">AUTO</text>
<path d="M1681.8 309.4L1691.8 305.6L1685.1 314.7Z" stroke="#a9a9ad" stroke-width="1.4" fill="none"/>
<path d="M1688 345.4H1727.3V353.6H1688Z M1689.4 356.9H1701.9V372.7H1689.4Z M1705.7 357.9H1728.8V363.6H1705.7Z M1707.2 366.5H1730.2V372.7H1707.2Z" stroke="#a9a9ad" stroke-width="1.7" fill="none" stroke-linejoin="round"/>
<path d="M1703 410V403Q1703 396 1710 396Q1717 396 1717 401" stroke="#a9a9ad" stroke-width="2.5" fill="none"/>
<path d="M1703 408H1729L1730 421H1704Z" fill="#a9a9ad"/>
<path d="M1703 461L1713 449H1735L1744 461L1735 472H1713Z" stroke="#a9a9ad" stroke-width="2" fill="none"/>
<ellipse cx="1724" cy="461" rx="7" ry="4.5" stroke="#a9a9ad" stroke-width="2" fill="none"/>
</svg>

<svg style="left:649px;top:91px" width="1136" height="58" viewBox="649 91 1136 58">
<g stroke="#c9c9cd" stroke-width="1.7" fill="none" stroke-linejoin="round">
 <path d="M656.5 111.5H681.5V136.5H656.5Z M656.5 111.5L667.5 99.5H693.5L681.5 111.5 M693.5 99.5V119 M681.5 136.5L686 132"/>
 <circle cx="692.4" cy="127.8" r="8.7" fill="#3c3e45"/><path d="M692.4 121.8V133.8M686.4 127.8H698.4"/>
 <path d="M710.5 100.5H745.5V135.5H710.5Z M718.3 100.5V135.5M725.9 100.5V135.5M733.5 100.5V135.5M741 100.5V135.5 M710.5 107.6H745.5M710.5 114.7H745.5M710.5 122.2H745.5M710.5 129.6H745.5"/>
 <circle cx="743" cy="130" r="8.7" fill="#3c3e45"/><path d="M743 124V136M737 130H749"/>
 <path d="M781.6 101.2L804.4 107.1L798.4 128.9L776.2 122.4Z"/>
 <rect x="767" y="134.8" width="35.8" height="3.4" rx="1.7"/>
 <path d="M774.5 117.5Q769 119 768 125"/>
 <path d="M763 121.8L772.9 124.5L766.9 131.6Z"/>
 <path d="M815.3 100.6H853.9V138.7H815.3Z M820.2 103.9H850.7V115.3H820.2Z M820.2 118.6H829.4V134.3H820.2Z M831.6 118.6H850.7V125.1H831.6Z M831.6 127.8H850.7V134.3H831.6Z"/>
</g>
<text x="762" y="112.6" font-family="Liberation Sans" font-size="6.8" font-weight="bold" fill="#c9c9cd" textLength="16" lengthAdjust="spacingAndGlyphs">AUTO</text>
<g stroke="#54565d" stroke-width="1.25" fill="none" stroke-linejoin="round">
 <path d="M885 134.5H877.4V99.5H897L905 104.5V105.5 M885 105.5H905.7L912.7 112V140.9H885Z M896 113.7H903L905.1 117V130L903 133.2H896L893.7 130V117Z"/>
 <path d="M936.7 134.5H929.6V99.5H950L958 104.5V105.5 M936.7 105.5H958.5L965 112V140.9H936.7Z M946 133V117H955Q958.4 117 958.4 121.3Q958.4 125.6 955 125.6H946"/>
 <path d="M982.3 103.9H1017.7 M982.3 109.3H1017.7V136H982.3Z M982.3 114.4H1017.7M982.3 118.2H1017.7M982.3 121.5H1017.7M982.3 126.5H1017.7M982.3 130.5H1017.7"/>
</g>
<path d="M1043.6 100.6V138.7" stroke="#b4b4b8" stroke-width="1.5"/>
<g stroke="#54565d" stroke-width="1.25" fill="none" stroke-linejoin="round">
 <path d="M1087.3 99.3L1094.3 106.3H1090V112H1084.6V106.3H1080.3Z M1087.3 140.5L1094.3 133.5H1090V127.8H1084.6V133.5H1080.3Z M1065.6 119.6L1072.6 113.3V117H1078.6V122.3H1072.6V125.9Z M1108.2 119.6L1101.2 113.3V117H1095.8V122.3H1101.2V125.9Z"/>
 <rect x="1084.5" y="117.5" width="5" height="5"/>
 <path d="M1123 124A16 16 0 0 1 1148 106 M1146.7 111.2L1156.5 102.8L1160 115.4Z M1125.7 125.9L1139.7 111.9L1153.5 125.9L1139.7 140.5Z"/>
 <path d="M1173.3 117.5H1194.2V139.1H1173.3Z M1196.3 115.4L1206.1 106.3 M1200 106H1206.5V112.5"/>
 <path d="M1173.3 100.7H1212.4V139.1H1198" stroke-dasharray="2.2 3"/>
 <path d="M1173.3 100.7V115" stroke-dasharray="2.2 3"/>
 <path d="M1243.2 102.1L1266.2 106.3L1262 128.7L1239 124.5Z M1227.8 135H1264.1V138.4H1227.8Z M1236.2 117.5L1229 124 M1225 123L1232 122.4L1227.8 131.5Z"/>
 <path d="M1280.2 100H1315.9V116.8H1280.2Z M1280.2 122.4H1315.9V139.1H1280.2Z"/>
 <path d="M1343.2 101H1371.5V128.5H1343.2Z M1330.9 111.1H1358.4V139.4H1330.9Z M1345 113L1356 124 M1343.5 119L1352 127.5 M1350 112L1357 119"/>
 <path d="M1386 100.3H1423.7V139.4H1407.7V117H1386Z M1387.4 117H1401.2V138.7H1387.4Z M1388 124L1395 117 M1388 131L1401 118 M1390 138L1401 127"/>
 <path d="M1439.6 111.9H1465V138.7H1439.6Z M1439.6 111.9L1451 101H1476V127L1465 138.7 M1465 111.9L1476 101 M1452 114V136" />
 <path d="M1491.8 101H1520.8V107.5H1510.7V138.7H1502V107.5H1491.8Z M1518 127Q1521 122 1527 123Q1530.3 124 1530.3 128V138H1526V136Q1523 138.5 1519 137.5Q1515.5 136 1516 132.5Q1517 129.5 1526 129.5"/>
 <path d="M1541.5 118.5L1560 101L1578.5 118.5L1560 139.5Z M1541.5 118.5H1578.5 M1547 97.5L1559 111 M1580.5 124Q1574.5 133 1575 137Q1576 141.6 1580.5 141.6Q1585.5 141.6 1586 137Q1586.5 133 1580.5 124Z"/>
 <path d="M1598.3 112.2H1634V127.7H1598.3Z M1602 112.2V118M1606 112.2V119.5M1610 112.2V118M1614 112.2V119.5M1618 112.2V118M1622 112.2V119.5M1626 112.2V118M1630 112.2V119.5"/>
 <path d="M1664.6 103.4L1684.3 111.1L1681 117.3L1661.5 110Z M1658 120L1654 122 M1650 115.3L1658.4 117.9L1653.7 123.6Z M1654.7 126.1H1689.4V137.5H1654.7Z M1663 117V125 M1680 117.5V125"/>
</g>
<path d="M1712.7 101.3V138.6" stroke="#b4b4b8" stroke-width="1.5"/>
<g stroke="#d4d4d8" stroke-width="1.5" fill="none" stroke-linejoin="round">
 <path d="M1736.6 109H1752.7Q1750 112 1751.5 115Q1753.5 118 1752 121Q1750 123.5 1752.7 124V139.6H1736.6Z M1736.6 124H1742Q1743 127 1745.5 127Q1748 127 1749 124H1752.7"/>
 <path d="M1752.7 124H1756.5Q1757 121 1759.5 121Q1762 121 1763 124H1768V139.6H1752.7Q1755 137 1754 134Q1752.5 131 1754.5 128Q1756 126 1752.7 124"/>
 <path d="M1765 98.7L1776 110L1764.5 121.5L1760.5 117.5Q1758 119 1756 117Q1754 114.5 1756.5 112.5L1753.6 109.6L1757 106Q1755 103.5 1757.5 101.5Q1760 99.5 1762 101.5Z"/>
</g>
</svg>

<div class="a" style="left:0;top:0;width:1931px;height:1px;background:#3179b3"></div>
<div class="a" style="left:3px;top:1px;width:1925px;height:1px;background:#030d2a"></div><div class="a" style="left:3px;top:42px;width:1925px;height:4px;background:#292d30"></div>
<div class="a" style="left:0;top:0;width:1px;height:1043px;background:#2366a8"></div>
<div class="a" style="left:1px;top:6px;width:2px;height:1035px;background:#dff6ff"></div>
<div class="a" style="left:3px;top:48px;width:1px;height:992px;background:#121214"></div>
<div class="a" style="left:1927px;top:6px;width:1px;height:1033px;background:#0c0c0e"></div>
<div class="a" style="left:1928px;top:6px;width:2px;height:1035px;background:#e6f8ff"></div>
<div class="a" style="left:1930px;top:0;width:1px;height:1043px;background:#1f6ec0"></div>
<div class="a" style="left:3px;top:1039px;width:1925px;height:1px;background:#121214"></div>
<div class="a" style="left:1px;top:1040px;width:1929px;height:2px;background:#e6f8ff"></div>
<div class="a" style="left:0;top:1042px;width:1931px;height:1px;background:#1f6ec0"></div>
</body></html>
